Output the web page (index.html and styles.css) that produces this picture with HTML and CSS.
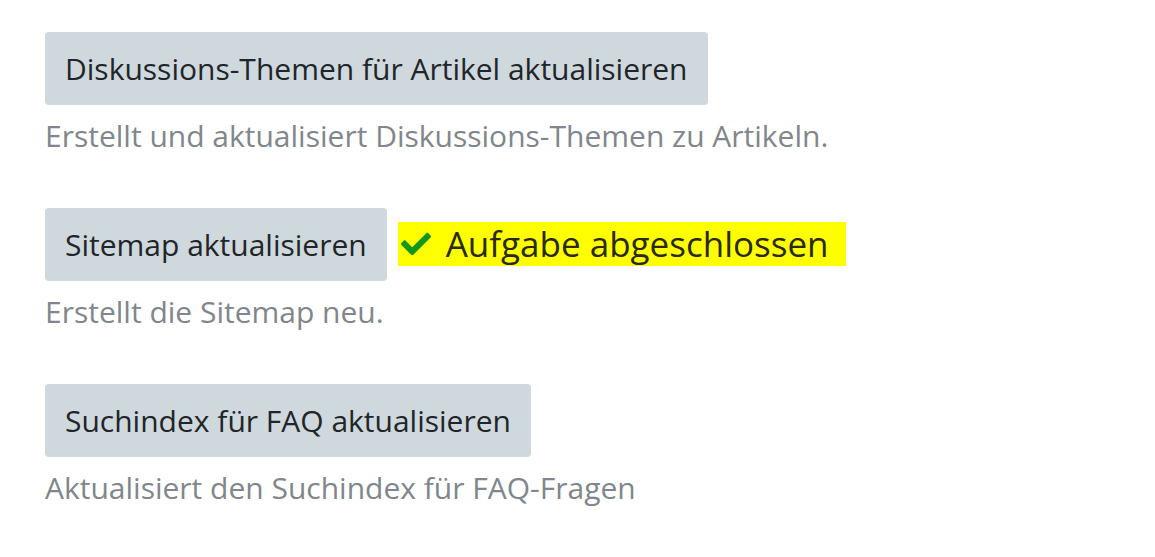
FILE: index.html
```html
<!DOCTYPE html>
<html lang="de">
<head>
<meta charset="utf-8">
<link rel="stylesheet" href="styles.css">
</head>
<body>
<div class="page">
  <div class="task">
    <div class="row"><button class="btn">Diskussions-Themen für Artikel aktualisieren</button></div>
    <p class="desc">Erstellt und aktualisiert Diskussions-Themen zu Artikeln.</p>
  </div>
  <div class="task">
    <div class="row">
      <button class="btn">Sitemap aktualisieren</button>
      <span class="done"><svg class="check" viewBox="0 0 512 512" width="30" height="30"><path fill="currentColor" d="M173.9 439.4l-166.4-166.4c-10-10-10-26.2 0-36.2l36.2-36.2c10-10 26.2-10 36.2 0L192 312.7 432.1 72.6c10-10 26.2-10 36.2 0l36.2 36.2c10 10 10 26.2 0 36.2l-294.4 294.4c-10 10-26.2 10-36.2 0z"/></svg><span>Aufgabe abgeschlossen</span></span>
    </div>
    <p class="desc">Erstellt die Sitemap neu.</p>
  </div>
  <div class="task">
    <div class="row"><button class="btn">Suchindex für FAQ aktualisieren</button></div>
    <p class="desc">Aktualisiert den Suchindex für FAQ-Fragen</p>
  </div>
</div>
</body>
</html>
```
FILE: styles.css
```css
html, body {
  margin: 0;
  padding: 0;
  background: #ffffff;
}
.page {
  padding: 32px 0 0 45px;
  font-family: "Open Sans", "Liberation Sans", sans-serif;
}
.task {
  margin-bottom: 50px;
}
.row {
  display: flex;
  align-items: center;
  gap: 11px;
}
.btn {
  font-family: inherit;
  font-size: 30px;
  line-height: 45px;
  color: #212529;
  background: #cfd8dc;
  border: none;
  border-radius: 4px;
  padding: 14px 20px;
  margin: 0;
  cursor: pointer;
}
.desc {
  margin: 8px 0 0 0;
  font-size: 30px;
  line-height: 45px;
  color: #80868b;
}
.done {
  display: inline-flex;
  align-items: center;
  gap: 15px;
  background: #ffff00;
  padding: 0 17px 0 3px;
  height: 44px;
  font-size: 35px;
  color: #2a2a14;
  margin-top: -2px;
}
.check {
  color: #12961c;
  width: 30px;
  height: 30px;
}
```
